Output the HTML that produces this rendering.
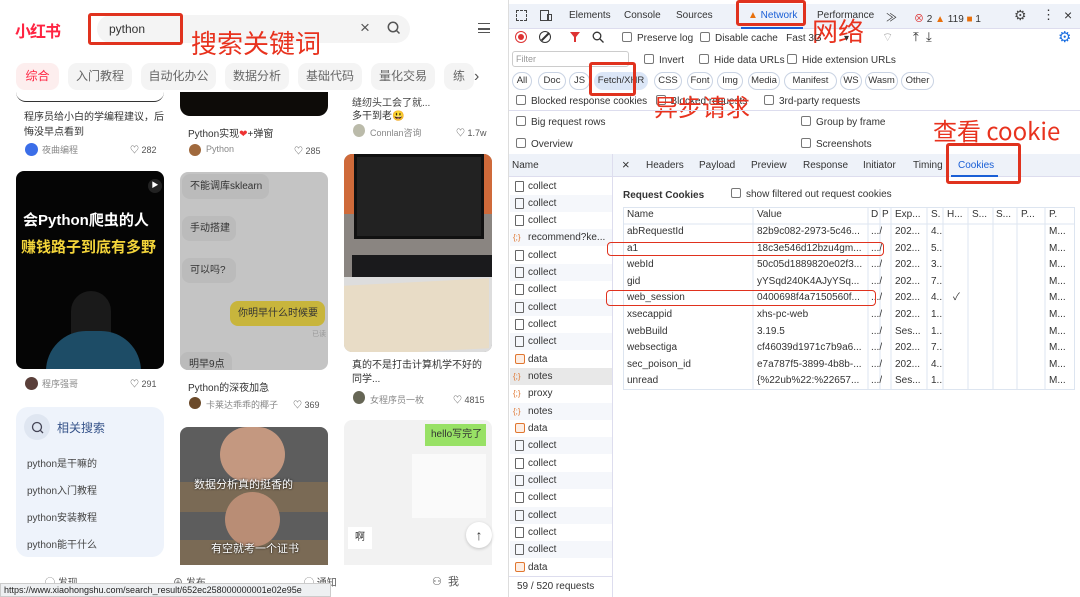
<!DOCTYPE html>
<html><head><meta charset="utf-8"><style>
*{margin:0;padding:0;box-sizing:border-box}
body{width:1080px;height:597px;overflow:hidden;background:#fff;font-family:"Liberation Sans","Noto Sans CJK SC",sans-serif;position:relative;color:#333}
.a{position:absolute;white-space:nowrap}
.red{border:3px solid #e0321e;border-radius:3px}
.ann{color:#e8321e;font-size:26px;font-family:"Noto Sans CJK SC",sans-serif}
.chip{position:absolute;top:63px;height:27px;background:#f4f4f4;border-radius:9px;font-size:12px;color:#666;line-height:27px;text-align:center}
.t{font-size:10px;color:#333}
.m{font-size:9px;color:#888}
.dt{font-size:10px;color:#333}
.cb{display:inline-block;width:10px;height:10px;border:1px solid #777;border-radius:2px;vertical-align:-1px;margin-right:5px}
.fc{position:absolute;top:72px;height:18px;border:1px solid #c9d3e3;border-radius:9px;font-size:9.5px;line-height:16px;text-align:center;background:#fff}
.row{position:absolute;left:510px;width:102px;height:17px;font-size:10px;line-height:17px;padding-left:18px}
.row:nth-child(even){background:#f5f7fb}
.ic{position:absolute;left:5px;top:3px;width:9px;height:11px;border:1px solid #666;border-radius:1px}
.ic.o{border:none;color:#e0762f;font-size:8px;top:0;left:3px}
.ic.d{border:1px solid #e0762f;width:10px;height:10px;top:3px;border-radius:2px;background:#fdeee4}
.tr{position:absolute;left:623px;width:452px;height:16.6px;font-size:10px;line-height:16.6px}
.tr span{position:absolute;overflow:hidden}
</style></head><body>

<!-- LEFT: xiaohongshu -->
<div class="a" style="left:15px;top:18px;font-size:16px;font-weight:bold;color:#ff2442;font-family:'Noto Sans CJK SC',sans-serif;letter-spacing:-1px">小红书</div>
<div class="a" style="left:97px;top:15px;width:313px;height:28px;background:#f4f4f4;border-radius:14px"></div>
<div class="a" style="left:109px;top:22px;font-size:12px;color:#333">python</div>
<div class="a" style="left:360px;top:18px;font-size:17px;color:#555">×</div>
<svg class="a" style="left:387px;top:21px" width="14" height="14"><circle cx="6" cy="6" r="4.7" fill="none" stroke="#555" stroke-width="1.5"/><path d="M9.5 9.5L12.5 12.5" stroke="#555" stroke-width="1.5"/></svg>
<div class="a" style="left:478px;top:23px;width:12px;height:10px;border-top:1.5px solid #555;border-bottom:1.5px solid #555"></div>
<div class="a" style="left:478px;top:28px;width:12px;height:1.5px;background:#555"></div>
<div class="a red" style="left:88px;top:13px;width:95px;height:32px"></div>
<div class="a ann" style="left:191px;top:24px">搜索关键词</div>

<div class="chip" style="left:16px;width:43px;background:#fdeeee;color:#ff2442">综合</div>
<div class="chip" style="left:68px;width:64px">入门教程</div>
<div class="chip" style="left:141px;width:75px">自动化办公</div>
<div class="chip" style="left:225px;width:64px">数据分析</div>
<div class="chip" style="left:298px;width:64px">基础代码</div>
<div class="chip" style="left:371px;width:64px">量化交易</div>
<div class="chip" style="left:444px;width:30px">练</div>
<div class="a" style="left:474px;top:63px;width:24px;height:27px;background:#fff;font-size:16px;line-height:27px;color:#555">›</div>

<!-- column 1 -->
<div class="a" style="left:16px;top:92px;width:148px;height:10px;border-bottom:1px solid #333;border-radius:0 0 10px 10px"></div>
<div class="a t" style="left:24px;top:110px;line-height:15px;white-space:normal;width:140px">程序员给小白的学编程建议，后悔没早点看到</div>
<div class="a" style="left:25px;top:143px;width:13px;height:13px;border-radius:50%;background:#3b6ee8"></div>
<div class="a m" style="left:42px;top:143px">夜曲编程</div>
<div class="a m" style="left:130px;top:143px;color:#555">♡ 282</div>
<div class="a" style="left:16px;top:171px;width:148px;height:198px;background:#050505;border-radius:8px;overflow:hidden">
 <div class="a" style="left:132px;top:8px;width:14px;height:14px;border-radius:50%;background:#222;color:#fff;font-size:7px;line-height:14px;text-align:center">▶</div>
 <div class="a" style="left:7px;top:38px;color:#fff;font-size:15px;font-weight:bold">会Python爬虫的人</div>
 <div class="a" style="left:5px;top:65px;color:#f3d43a;font-size:15px;font-weight:bold">赚钱路子到底有多野</div>
 <div class="a" style="left:55px;top:120px;width:40px;height:50px;border-radius:20px 20px 5px 5px;background:#1a1a1a"></div>
 <div class="a" style="left:30px;top:160px;width:95px;height:40px;border-radius:40px 40px 0 0;background:#1d4c66"></div>
</div>
<div class="a" style="left:25px;top:377px;width:13px;height:13px;border-radius:50%;background:#5a3f3a"></div>
<div class="a m" style="left:42px;top:377px">程序强哥</div>
<div class="a m" style="left:130px;top:377px;color:#555">♡ 291</div>
<div class="a" style="left:16px;top:407px;width:148px;height:150px;background:#eef3fb;border-radius:12px">
 <div class="a" style="left:8px;top:7px;width:26px;height:26px;border-radius:50%;background:#dfe6f1"></div>
 <svg class="a" style="left:15px;top:14px" width="13" height="13"><circle cx="6" cy="6" r="4.5" fill="none" stroke="#445" stroke-width="1.3"/><path d="M9.3 9.3L12 12" stroke="#445" stroke-width="1.3"/></svg>
 <div class="a" style="left:41px;top:12px;font-size:12px;color:#37548a">相关搜索</div>
 <div class="a t" style="left:11px;top:48px;color:#444">python是干嘛的</div>
 <div class="a t" style="left:11px;top:75px;color:#444">python入门教程</div>
 <div class="a t" style="left:11px;top:102px;color:#444">python安装教程</div>
 <div class="a t" style="left:11px;top:129px;color:#444">python能干什么</div>
</div>

<!-- column 2 -->
<div class="a" style="left:180px;top:92px;width:148px;height:24px;background:#0d0b08;border-radius:0 0 10px 10px"></div>
<div class="a t" style="left:188px;top:125px">Python实现<span style="color:#e33">❤</span>+弹窗</div>
<div class="a" style="left:189px;top:144px;width:12px;height:12px;border-radius:50%;background:#a0693d"></div>
<div class="a m" style="left:206px;top:144px">Python</div>
<div class="a m" style="left:294px;top:144px;color:#555">♡ 285</div>
<div class="a" style="left:180px;top:172px;width:148px;height:198px;background:#c4c4c4;border-radius:8px;overflow:hidden">
 <div class="a" style="left:2px;top:2px;width:87px;height:25px;border-radius:8px;background:#bbb;font-size:10px;line-height:25px;padding-left:8px">不能调库sklearn</div>
 <div class="a" style="left:2px;top:44px;width:54px;height:25px;border-radius:8px;background:#bbb;font-size:10px;line-height:25px;padding-left:8px">手动搭建</div>
 <div class="a" style="left:2px;top:86px;width:54px;height:25px;border-radius:8px;background:#bbb;font-size:10px;line-height:25px;padding-left:8px">可以吗?</div>
 <div class="a" style="left:50px;top:129px;width:95px;height:25px;border-radius:8px;background:#c8b53c;font-size:10px;line-height:25px;padding-left:8px">你明早什么时候要</div>
 <div class="a" style="left:132px;top:157px;font-size:7px;color:#999">已读</div>
 <div class="a" style="left:0;top:180px;width:52px;height:25px;border-radius:8px;background:#bbb;font-size:10px;line-height:25px;padding-left:9px">明早9点</div>
</div>
<div class="a t" style="left:188px;top:379px">Python的深夜加急</div>
<div class="a" style="left:189px;top:397px;width:12px;height:12px;border-radius:50%;background:#6b4a2a"></div>
<div class="a m" style="left:206px;top:398px">卡莱达乖乖的椰子</div>
<div class="a m" style="left:293px;top:398px;color:#555">♡ 369</div>
<div class="a" style="left:180px;top:427px;width:148px;height:138px;background:#5d5d5d;border-radius:8px 8px 0 0;overflow:hidden">
 <div class="a" style="left:0;top:55px;width:148px;height:30px;background:#7a6a55"></div>
 <div class="a" style="left:0;top:113px;width:148px;height:25px;background:#7a6a55"></div>
 <div class="a" style="left:40px;top:0;width:65px;height:55px;border-radius:30px;background:#c49880"></div>
 <div class="a" style="left:45px;top:65px;width:55px;height:55px;border-radius:28px;background:#b98d75"></div>
 <div class="a" style="left:14px;top:49px;color:#fff;font-size:11px;text-shadow:0 0 2px #000">数据分析真的挺香的</div>
 <div class="a" style="left:31px;top:113px;color:#fff;font-size:11px;text-shadow:0 0 2px #000">有空就考一个证书</div>
</div>

<!-- column 3 -->
<div class="a t" style="left:352px;top:94px;color:#444">缝纫头工会了就...</div>
<div class="a t" style="left:352px;top:107px">多干到老😃</div>
<div class="a" style="left:353px;top:124px;width:12px;height:13px;border-radius:50%;background:#bba"></div>
<div class="a m" style="left:370px;top:126px">Connlan咨询</div>
<div class="a m" style="left:456px;top:126px;color:#555">♡ 1.7w</div>
<div class="a" style="left:344px;top:154px;width:148px;height:198px;background:#8a8581;border-radius:8px;overflow:hidden">
 <div class="a" style="left:0;top:0;width:148px;height:60px;background:#cf6a3a"></div>
 <div class="a" style="left:10px;top:0;width:130px;height:85px;background:#222;border:3px solid #111"></div>
 <div class="a" style="left:8px;top:101px;width:140px;height:22px;background:#1a1a1c"></div>
 <div class="a" style="left:0;top:123px;width:148px;height:75px;background:#ddd"></div>
 <div class="a" style="left:0;top:128px;width:145px;height:70px;background:#e8dcc6;transform:skewY(-3deg)"></div>
</div>
<div class="a t" style="left:352px;top:359px;line-height:14px">真的不是打击计算机学不好的<br>同学...</div>
<div class="a" style="left:353px;top:391px;width:12px;height:13px;border-radius:50%;background:#665"></div>
<div class="a m" style="left:370px;top:393px">女程序员一枚</div>
<div class="a m" style="left:453px;top:393px;color:#555">♡ 4815</div>
<div class="a" style="left:344px;top:420px;width:148px;height:145px;background:#f2f2f2;border-radius:8px 8px 0 0;overflow:hidden">
 <div class="a" style="left:81px;top:4px;width:61px;height:22px;background:#98e165;font-size:10px;line-height:22px;padding-left:6px">hello写完了</div>
 <div class="a" style="left:68px;top:34px;width:74px;height:64px;background:#fafafa"></div>
 <div class="a" style="left:4px;top:107px;width:24px;height:22px;background:#fff;font-size:10px;line-height:22px;text-align:center">啊</div>
</div>
<div class="a" style="left:466px;top:522px;width:26px;height:26px;border-radius:50%;background:#fff;box-shadow:0 1px 3px rgba(0,0,0,.2);text-align:center;line-height:26px;font-size:14px;color:#333">↑</div>

<div class="a" style="left:0;top:565px;width:508px;height:32px;background:#fff"></div>
<div class="a" style="left:45px;top:574px;font-size:10px;color:#555">◯ 发现</div>
<div class="a" style="left:173px;top:574px;font-size:10px;color:#555">⊕ 发布</div>
<div class="a" style="left:304px;top:574px;font-size:10px;color:#555">◯ 通知</div>
<div class="a" style="left:432px;top:573px;font-size:11px;color:#555">⚇ &nbsp;我</div>
<div class="a" style="left:0;top:583px;width:331px;height:14px;background:#eef0f2;border:1px solid #ccc;font-size:9px;line-height:12px;padding-left:3px;color:#222">https://www.xiaohongshu.com/search_result/652ec258000000001e02e95e</div>
<div class="a" style="left:508px;top:0;width:1px;height:597px;background:#ddd"></div>

<!-- DEVTOOLS -->
<div class="a" style="left:509px;top:4px;width:571px;height:25px;background:#eef2f9;border-bottom:1px solid #dde"></div>
<div class="a" style="left:516px;top:10px;width:11px;height:11px;border:1px dashed #444"></div>
<div class="a" style="left:540px;top:10px;width:9px;height:11px;border:1.3px solid #444"></div>
<div class="a" style="left:547px;top:14px;width:5px;height:7px;border:1.3px solid #444"></div>
<div class="a dt" style="left:569px;top:10px">Elements</div>
<div class="a dt" style="left:624px;top:10px">Console</div>
<div class="a dt" style="left:676px;top:10px">Sources</div>
<div class="a dt" style="left:748px;top:10px;color:#1a5fd6"><span style="color:#e8700c">▲</span> Network</div>
<div class="a" style="left:741px;top:27px;width:62px;height:2px;background:#1a5fd6"></div>
<div class="a dt" style="left:817px;top:10px">Performance</div>
<div class="a dt" style="left:886px;top:9px;font-size:11px">≫</div>
<div class="a dt" style="left:914px;top:10px"><span style="color:#d33">⊗</span> 2 <span style="color:#e8700c">▲</span> 119 <span style="color:#e8700c">■</span> 1</div>
<div class="a dt" style="left:1014px;top:7px;font-size:14px;color:#444">⚙</div>
<div class="a dt" style="left:1042px;top:7px;font-size:13px">⋮</div>
<div class="a dt" style="left:1064px;top:7px;font-size:14px">×</div>
<div class="a red" style="left:736px;top:0;width:70px;height:26px"></div>
<div class="a ann" style="left:812px;top:12px">网络</div>

<div class="a" style="left:515px;top:31px;width:12px;height:12px;border-radius:50%;border:1.5px solid #d33"></div>
<div class="a" style="left:518px;top:34px;width:6px;height:6px;border-radius:50%;background:#d33"></div>
<div class="a" style="left:539px;top:31px;width:12px;height:12px;border-radius:50%;border:1.5px solid #333"></div>
<div class="a" style="left:540px;top:36px;width:10px;height:1.5px;background:#333;transform:rotate(-45deg)"></div>
<svg class="a" style="left:569px;top:31px" width="12" height="12"><path d="M1 1H11L7 6V11L5 11V6Z" fill="#d33"/></svg>
<svg class="a" style="left:592px;top:31px" width="12" height="12"><circle cx="5" cy="5" r="3.8" fill="none" stroke="#333" stroke-width="1.3"/><path d="M8 8L11.5 11.5" stroke="#333" stroke-width="1.3"/></svg>
<div class="a dt" style="left:622px;top:32px"><span class="cb"></span>Preserve log</div>
<div class="a dt" style="left:700px;top:32px"><span class="cb"></span>Disable cache &nbsp; Fast 3G &nbsp;&nbsp;&nbsp;&nbsp;&nbsp;&nbsp;&nbsp;▾</div>
<div class="a dt" style="left:882px;top:30px;color:#999;font-size:12px">⌔</div>
<div class="a dt" style="left:913px;top:29px;font-size:13px">⤒ &nbsp;⤓</div>
<div class="a dt" style="left:1058px;top:28px;font-size:15px;color:#1a6ee0">⚙</div>

<div class="a" style="left:512px;top:51px;width:117px;height:16px;border:1px solid #ccc;border-radius:3px;font-size:9px;color:#999;line-height:14px;padding-left:3px">Filter</div>
<div class="a dt" style="left:644px;top:54px"><span class="cb"></span>Invert</div>
<div class="a dt" style="left:699px;top:54px"><span class="cb"></span>Hide data URLs</div>
<div class="a dt" style="left:787px;top:54px"><span class="cb"></span>Hide extension URLs</div>

<div class="fc" style="left:512px;width:20px">All</div>
<div class="fc" style="left:538px;width:28px">Doc</div>
<div class="fc" style="left:569px;width:21px">JS</div>
<div class="fc" style="left:594px;width:54px;background:#dbe6f7;border-color:#dbe6f7">Fetch/XHR</div>
<div class="fc" style="left:654px;width:28px">CSS</div>
<div class="fc" style="left:687px;width:26px">Font</div>
<div class="fc" style="left:717px;width:26px">Img</div>
<div class="fc" style="left:748px;width:32px">Media</div>
<div class="fc" style="left:784px;width:53px">Manifest</div>
<div class="fc" style="left:840px;width:22px">WS</div>
<div class="fc" style="left:865px;width:33px">Wasm</div>
<div class="fc" style="left:901px;width:33px">Other</div>
<div class="a red" style="left:589px;top:62px;width:47px;height:34px"></div>

<div class="a dt" style="left:516px;top:95px"><span class="cb"></span>Blocked response cookies &nbsp;&nbsp;<span class="cb"></span>Blocked requests</div>
<div class="a dt" style="left:764px;top:95px"><span class="cb"></span>3rd-party requests</div>
<div class="a ann" style="left:654px;top:88px;font-size:24px">异步请求</div>
<div class="a" style="left:509px;top:110px;width:571px;height:1px;background:#dde"></div>
<div class="a dt" style="left:516px;top:116px"><span class="cb"></span>Big request rows</div>
<div class="a dt" style="left:801px;top:116px"><span class="cb"></span>Group by frame</div>
<div class="a dt" style="left:516px;top:138px"><span class="cb"></span>Overview</div>
<div class="a dt" style="left:801px;top:138px"><span class="cb"></span>Screenshots</div>
<div class="a ann" style="left:933px;top:112px;font-size:24px">查看 cookie</div>

<div class="a" style="left:509px;top:154px;width:571px;height:23px;background:#eef2f9;border-bottom:1px solid #dde"></div>
<div class="a" style="left:612px;top:154px;width:1px;height:443px;background:#dde"></div>
<div class="a dt" style="left:512px;top:160px">Name</div>
<div class="a dt" style="left:622px;top:157px;font-size:13px">×</div>
<div class="a dt" style="left:646px;top:160px">Headers</div>
<div class="a dt" style="left:699px;top:160px">Payload</div>
<div class="a dt" style="left:751px;top:160px">Preview</div>
<div class="a dt" style="left:803px;top:160px">Response</div>
<div class="a dt" style="left:863px;top:160px">Initiator</div>
<div class="a dt" style="left:913px;top:160px">Timing</div>
<div class="a dt" style="left:958px;top:160px;color:#1a5fd6">Cookies</div>
<div class="a" style="left:951px;top:175px;width:47px;height:2px;background:#1a5fd6"></div>
<div class="a red" style="left:946px;top:143px;width:75px;height:41px"></div>

<div>
<div class="row" style="top:178px"><span class="ic"></span>collect</div>
<div class="row" style="top:195px"><span class="ic"></span>collect</div>
<div class="row" style="top:212px"><span class="ic"></span>collect</div>
<div class="row" style="top:229px"><span class="ic o">{;}</span>recommend?ke...</div>
<div class="row" style="top:247px"><span class="ic"></span>collect</div>
<div class="row" style="top:264px"><span class="ic"></span>collect</div>
<div class="row" style="top:281px"><span class="ic"></span>collect</div>
<div class="row" style="top:299px"><span class="ic"></span>collect</div>
<div class="row" style="top:316px"><span class="ic"></span>collect</div>
<div class="row" style="top:333px"><span class="ic"></span>collect</div>
<div class="row" style="top:351px"><span class="ic d"></span>data</div>
<div class="row" style="top:368px;background:#e8e8e8"><span class="ic o">{;}</span>notes</div>
<div class="row" style="top:385px"><span class="ic o">{;}</span>proxy</div>
<div class="row" style="top:403px"><span class="ic o">{;}</span>notes</div>
<div class="row" style="top:420px"><span class="ic d"></span>data</div>
<div class="row" style="top:437px"><span class="ic"></span>collect</div>
<div class="row" style="top:455px"><span class="ic"></span>collect</div>
<div class="row" style="top:472px"><span class="ic"></span>collect</div>
<div class="row" style="top:489px"><span class="ic"></span>collect</div>
<div class="row" style="top:507px"><span class="ic"></span>collect</div>
<div class="row" style="top:524px"><span class="ic"></span>collect</div>
<div class="row" style="top:541px"><span class="ic"></span>collect</div>
<div class="row" style="top:559px"><span class="ic d"></span>data</div>
</div>
<div class="a" style="left:509px;top:576px;width:103px;height:1px;background:#dde"></div>
<div class="a dt" style="left:517px;top:581px">59 / 520 requests</div>

<div class="a" style="left:623px;top:190px;font-size:10px;font-weight:bold;color:#333">Request Cookies</div>
<div class="a dt" style="left:731px;top:188px"><span class="cb"></span>show filtered out request cookies</div>
<div class="a" style="left:623px;top:207px;width:452px;height:183px;border:1px solid #dde5f0"></div>
<svg class="a" style="left:623px;top:207px" width="452" height="183">
<g stroke="#dde5f0" stroke-width="1">
<path d="M130 0V183M245 0V183M257 0V183M268 0V183M304 0V183M320 0V183M345 0V183M370 0V183M394 0V183M422 0V183"/>
<path d="M0 17H452"/>
</g></svg>
<div class="tr" style="top:207px"><span style="left:4px">Name</span><span style="left:134px">Value</span><span style="left:248px">D</span><span style="left:259px">P</span><span style="left:272px">Exp...</span><span style="left:308px">S.</span><span style="left:324px">H...</span><span style="left:349px">S...</span><span style="left:373px">S...</span><span style="left:398px">P...</span><span style="left:426px">P.</span></div>
<div class="tr" style="top:224px"><span style="left:4px">abRequestId</span><span style="left:134px">82b9c082-2973-5c46...</span><span style="left:248px">.../</span><span style="left:272px">202...</span><span style="left:308px">4..</span><span style="left:426px">M...</span></div>
<div class="tr" style="top:240.6px"><span style="left:4px">a1</span><span style="left:134px">18c3e546d12bzu4gm...</span><span style="left:248px">.../</span><span style="left:272px">202...</span><span style="left:308px">5..</span><span style="left:426px">M...</span></div>
<div class="tr" style="top:257.2px"><span style="left:4px">webId</span><span style="left:134px">50c05d1889820e02f3...</span><span style="left:248px">.../</span><span style="left:272px">202...</span><span style="left:308px">3..</span><span style="left:426px">M...</span></div>
<div class="tr" style="top:273.8px"><span style="left:4px">gid</span><span style="left:134px">yYSqd240K4AJyYSq...</span><span style="left:248px">.../</span><span style="left:272px">202...</span><span style="left:308px">7..</span><span style="left:426px">M...</span></div>
<div class="tr" style="top:290.4px"><span style="left:4px">web_session</span><span style="left:134px">0400698f4a7150560f...</span><span style="left:248px">.../</span><span style="left:272px">202...</span><span style="left:308px">4..</span><span style="left:330px">✓</span><span style="left:426px">M...</span></div>
<div class="tr" style="top:307px"><span style="left:4px">xsecappid</span><span style="left:134px">xhs-pc-web</span><span style="left:248px">.../</span><span style="left:272px">202...</span><span style="left:308px">1..</span><span style="left:426px">M...</span></div>
<div class="tr" style="top:323.6px"><span style="left:4px">webBuild</span><span style="left:134px">3.19.5</span><span style="left:248px">.../</span><span style="left:272px">Ses...</span><span style="left:308px">1..</span><span style="left:426px">M...</span></div>
<div class="tr" style="top:340.2px"><span style="left:4px">websectiga</span><span style="left:134px">cf46039d1971c7b9a6...</span><span style="left:248px">.../</span><span style="left:272px">202...</span><span style="left:308px">7..</span><span style="left:426px">M...</span></div>
<div class="tr" style="top:356.8px"><span style="left:4px">sec_poison_id</span><span style="left:134px">e7a787f5-3899-4b8b-...</span><span style="left:248px">.../</span><span style="left:272px">202...</span><span style="left:308px">4..</span><span style="left:426px">M...</span></div>
<div class="tr" style="top:373.4px"><span style="left:4px">unread</span><span style="left:134px">{%22ub%22:%22657...</span><span style="left:248px">.../</span><span style="left:272px">Ses...</span><span style="left:308px">1..</span><span style="left:426px">M...</span></div>
<div class="a" style="left:607px;top:242px;width:277px;height:14px;border:1.5px solid #e0321e;border-radius:4px"></div>
<div class="a" style="left:606px;top:290px;width:270px;height:16px;border:1.5px solid #e0321e;border-radius:4px"></div>
</body></html>
